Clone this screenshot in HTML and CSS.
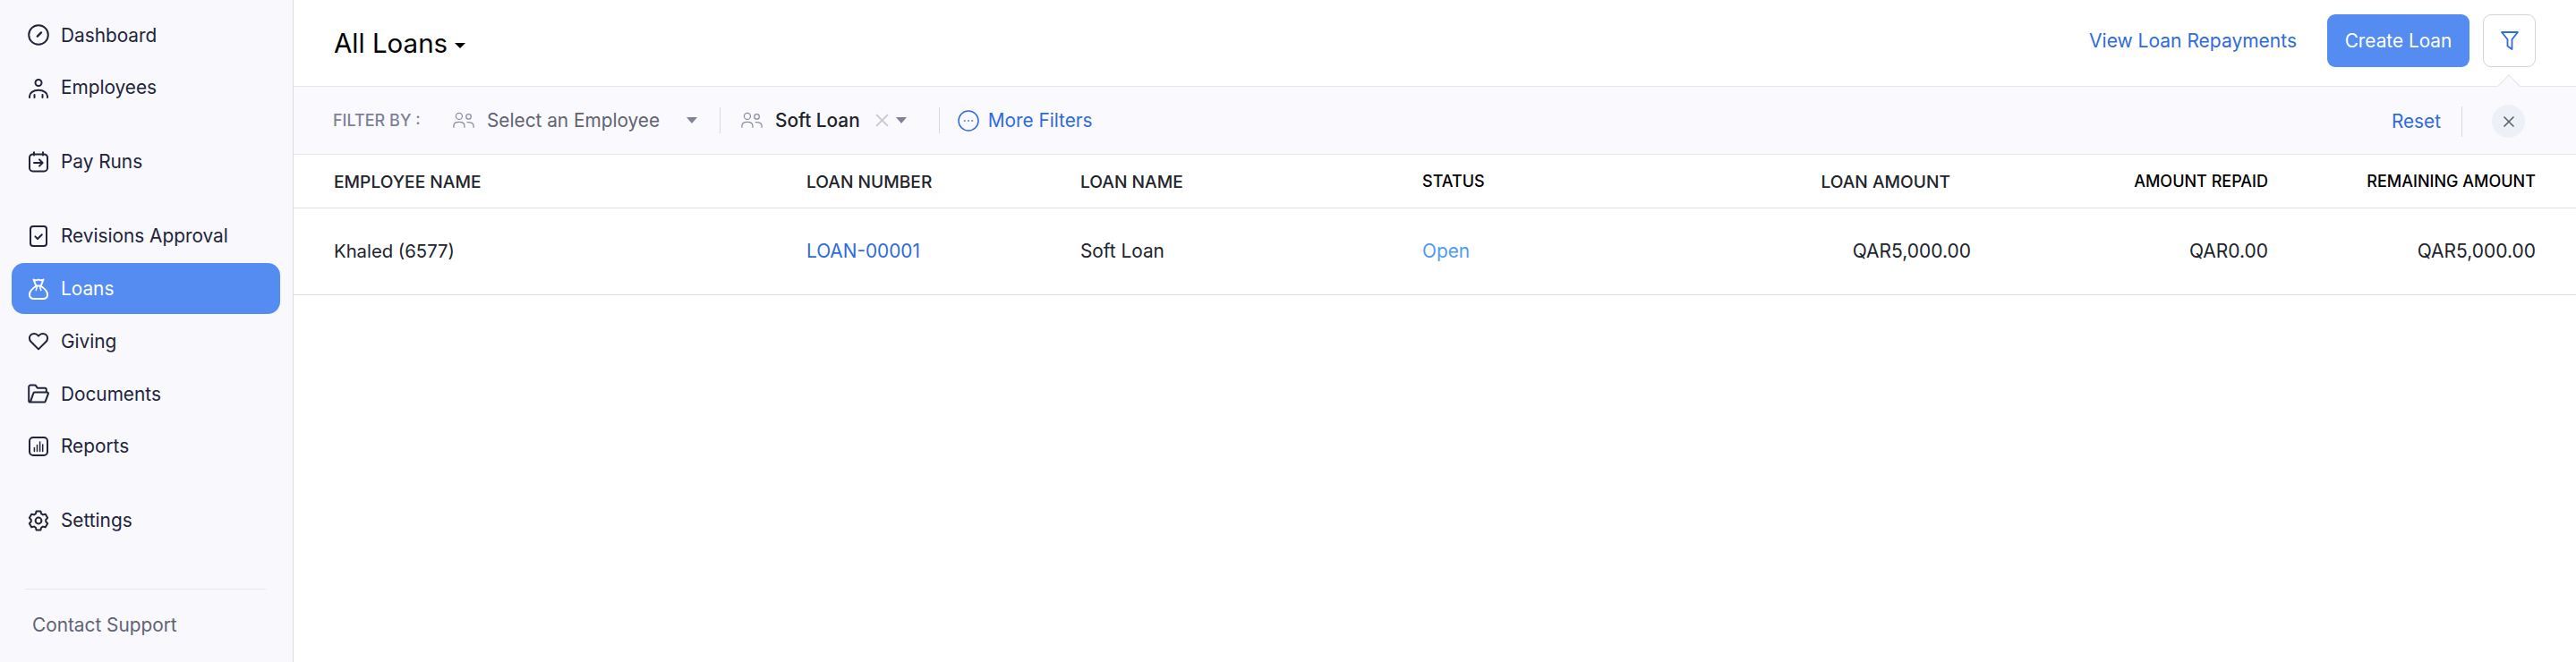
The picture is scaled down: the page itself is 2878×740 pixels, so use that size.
FILE: index.html
```html
<!DOCTYPE html>
<html lang="en">
<head>
    <meta charset="UTF-8">
    <title>All Loans</title>
    <link rel="stylesheet" href="styles.css">
</head>
<body>
    <aside class="sidebar">
        <nav class="nav">
            <div class="nav-group">
                <a class="nav-item" href="#">
                    <svg class="nav-icon" viewBox="0 0 24 24"><circle cx="12" cy="12" r="10.8"/><path d="M10.8 13.6L15 9.4" stroke-width="2.4"/></svg>
                    Dashboard
                </a>
                <a class="nav-item" href="#">
                    <svg class="nav-icon" viewBox="0 0 24 24"><circle cx="12" cy="6.5" r="3.5"/><path d="M2 23v-1.500C2 18 6 14.800 12 14.800S22 18 22 21.500V23M7.500 23v-3M16.500 23v-3"/></svg>
                    Employees
                </a>
            </div>
            <div class="nav-group">
                <a class="nav-item" href="#">
                    <svg class="nav-icon" viewBox="0 0 24 24"><rect x="2" y="3.4" width="20" height="19" rx="3.6"/><path d="M7 1.200v3.400M17 1.200v3.400M7 13h9.500M13 9.400l3.600 3.600-3.600 3.600"/></svg>
                    Pay Runs
                </a>
            </div>
            <div class="nav-group">
                <a class="nav-item" href="#">
                    <svg class="nav-icon" viewBox="0 0 24 24"><rect x="3" y="1" width="18" height="22" rx="3"/><path d="M8.400 12.400l2.600 2.600 4.800-4.800"/></svg>
                    Revisions Approval
                </a>
                <a class="nav-item active" href="#">
                    <svg class="nav-icon" viewBox="0 0 24 24"><path d="M9.800 8.500C5 11.500 2 15 2 18.200 2 21.200 4 23 7 23h10c3 0 5-1.800 5-4.800 0-3.200-3-6.700-7.800-9.700M9.300 8.500h5.400M6.500 1.500L9.300 8.500M17.500 1.500L14.700 8.500M6.500 1.500c1.800 1 3.700 1 5.500 0 1.800 1 3.700 1 5.500 0"/><path d="M10.600 9l-1.400 4.500M13.400 9l1.400 4.500" stroke-width="1.500"/></svg>
                    Loans
                </a>
                <a class="nav-item" href="#">
                    <svg class="nav-icon" viewBox="0 0 24 24"><path d="M12 21.400L3.600 13C1.400 10.800 1.400 7.400 3.400 5.400c2-2 5.400-2 7.400 0L12 6.600l1.200-1.200c2-2 5.400-2 7.400 0s2 5.400-.2 7.600z"/></svg>
                    Giving
                </a>
                <a class="nav-item" href="#">
                    <svg class="nav-icon" viewBox="0 0 24 24"><path d="M2.800 21.600c-1 0-1.600-.6-1.600-1.600V4.600c0-1.200.8-2 2-2h4.400c.8 0 1.400.4 1.800 1l1.400 2.200h8.200c1 0 1.800.8 1.800 1.800v2.800M2.800 21.600h15.400c.8 0 1.400-.4 1.600-1.200l3-8c.4-1-.2-1.800-1.200-1.800H7.800c-.8 0-1.400.4-1.600 1.200z"/></svg>
                    Documents
                </a>
                <a class="nav-item" href="#">
                    <svg class="nav-icon" viewBox="0 0 24 24"><rect x="2" y="2" width="20" height="20" rx="4"/><path d="M7.400 13.400v4M10.500 10.400v7M13.600 7v10.400M16.700 10v7.400" stroke-width="1.5"/></svg>
                    Reports
                </a>
            </div>
            <div class="nav-group">
                <a class="nav-item" href="#">
                    <svg class="nav-icon" viewBox="0 0 24 24"><circle cx="12" cy="12" r="3.4"/><path d="M9.600 1.600h4.800l.8 2.800q1 .4 1.800 1l2.800-.7 2.400 4.200-2 2.100q.2 1 0 2l2 2.100-2.400 4.200-2.800-.7q-.8.6-1.800 1l-.8 2.800H9.600l-.8-2.800q-1-.4-1.800-1l-2.800.7-2.400-4.200 2-2.100q-.2-1 0-2l-2-2.100 2.400-4.200 2.800.7q.8-.6 1.800-1z"/></svg>
                    Settings
                </a>
            </div>
        </nav>
        <div class="support">Contact Support</div>
    </aside>

    <main class="content">
        <header class="topbar">
            <h1 class="title">All Loans <span class="caret caret-dark"></span></h1>
            <div class="actions">
                <a class="link" href="#">View Loan Repayments</a>
                <button class="btn-primary">Create Loan</button>
                <button class="btn-filter">
                    <svg viewBox="0 0 20 21"><path d="M1 1h18l-6.500 8v11l-5-3.500V9z"/></svg>
                </button>
            </div>
        </header>

        <section class="filters">
            <span class="filter-label">FILTER BY :</span>
            <div class="filter-select employee">
                <svg class="people" viewBox="0 0 26 20"><circle cx="7.500" cy="5" r="3.800"/><circle cx="19" cy="5.600" r="3"/><path d="M1 19v-2.500c0-3 2.500-4.500 6.500-4.500s6.500 1.500 6.500 4.500V19M17 12.400c4.500-.4 8 1 8 4.100V19"/></svg>
                <span>Select an Employee</span>
                <span class="caret"></span>
            </div>
            <span class="sep"></span>
            <div class="filter-select loan">
                <svg class="people" viewBox="0 0 26 20"><circle cx="7.500" cy="5" r="3.800"/><circle cx="19" cy="5.600" r="3"/><path d="M1 19v-2.500c0-3 2.500-4.500 6.500-4.500s6.500 1.500 6.500 4.500V19M17 12.400c4.500-.4 8 1 8 4.100V19"/></svg>
                <span class="filter-value">Soft Loan</span>
                <svg class="clear" viewBox="0 0 14 14"><path d="M1 1l12 12M13 1L1 13"/></svg>
                <span class="caret"></span>
            </div>
            <span class="sep"></span>
            <a class="link more" href="#">
                <svg viewBox="0 0 24 24"><circle cx="12" cy="12" r="11"/><path d="M7.500 12h.6M11.700 12h.6M15.900 12h.6"/></svg>
                More Filters
            </a>
            <div class="filter-end">
                <a class="link" href="#">Reset</a>
                <span class="sep"></span>
                <button class="btn-close">
                    <svg viewBox="0 0 14 14"><path d="M1.500 1.500l11 11M12.500 1.500l-11 11"/></svg>
                </button>
            </div>
        </section>

        <table class="loans">
            <colgroup>
                <col class="c-employee"><col class="c-number"><col class="c-name"><col class="c-status"><col class="c-amount"><col class="c-repaid"><col class="c-remaining">
            </colgroup>
            <thead>
                <tr>
                    <th>EMPLOYEE NAME</th>
                    <th>LOAN NUMBER</th>
                    <th>LOAN NAME</th>
                    <th class="small">STATUS</th>
                    <th class="num amount-head">LOAN AMOUNT</th>
                    <th class="num small">AMOUNT REPAID</th>
                    <th class="num small">REMAINING AMOUNT</th>
                </tr>
            </thead>
            <tbody>
                <tr>
                    <td class="employee-name">Khaled (6577)</td>
                    <td><a class="link" href="#">LOAN-00001</a></td>
                    <td>Soft Loan</td>
                    <td class="status">Open</td>
                    <td class="num">QAR5,000.00</td>
                    <td class="num">QAR0.00</td>
                    <td class="num">QAR5,000.00</td>
                </tr>
            </tbody>
        </table>
    </main>
</body>
</html>
```

FILE: styles.css
```css
* {
    margin: 0;
    padding: 0;
    box-sizing: border-box;
    font-family: Inter, "Liberation Sans", sans-serif;
}

body {
    display: flex;
    height: 100vh;
    overflow: hidden;
    background: #fff;
    color: #21232b;
    font-size: 20.8px;
}

a {
    text-decoration: none;
}

.sidebar {
    width: 328px;
    flex-shrink: 0;
    display: flex;
    flex-direction: column;
    background: #f8f8fd;
    border-right: 1px solid #dcdce2;
    padding: 10.5px 14px 0 13px;
}

.nav {
    flex: 1;
    display: flex;
    flex-direction: column;
    gap: 26px;
}

.nav-group {
    display: flex;
    flex-direction: column;
    gap: 1.8px;
}

.nav-item {
    display: flex;
    align-items: center;
    gap: 13px;
    height: 57px;
    padding-left: 18px;
    border-radius: 14px;
    color: #21243a;
}

.nav-item.active {
    background: #548cf1;
    color: #fff;
}

.nav-icon {
    width: 24px;
    height: 24px;
    fill: none;
    stroke: currentColor;
    stroke-width: 2;
    stroke-linecap: round;
    stroke-linejoin: round;
}

.support {
    margin: 0 16px 0 15px;
    height: 82px;
    padding: 27px 0 0 8px;
    border-top: 1px solid #e7e7ec;
    color: #5f6373;
}

.content {
    flex: 1;
    min-width: 0;
}

.topbar {
    display: flex;
    align-items: center;
    justify-content: space-between;
    height: 97px;
    padding: 0 45px;
    border-bottom: 1px solid #e6e6ea;
}

.title {
    font-size: 29.5px;
    font-weight: 400;
    color: #000;
}

.caret {
    display: inline-block;
    border-left: 6px solid transparent;
    border-right: 6px solid transparent;
    border-top: 7px solid #7f8298;
}

.caret-dark {
    border-top: 6px solid #000;
    vertical-align: middle;
}

.actions {
    display: flex;
    align-items: center;
    margin-bottom: 5px;
}

.link {
    color: #2f6bdb;
}

.actions .link {
    margin-right: 34px;
    font-size: 21px;
}

.btn-primary {
    width: 159px;
    height: 59px;
    border: none;
    border-radius: 9px;
    background: #548cf1;
    color: #fff;
    font-size: 20.8px;
}

.btn-filter {
    display: flex;
    align-items: center;
    justify-content: center;
    width: 59px;
    height: 59px;
    margin-left: 15px;
    background: #fff;
    border: 1px solid #d4d4d8;
    border-radius: 9px;
}

.btn-filter svg {
    width: 20px;
    height: 21px;
    fill: none;
    stroke: #2f6bdb;
    stroke-width: 1.8;
    stroke-linejoin: round;
}

.filters {
    position: relative;
    display: flex;
    align-items: center;
    height: 76px;
    padding: 0 57px 0 44px;
    background: #fafafe;
    border-bottom: 1px solid #e6e6ea;
}

/* little arrow pointing up at the filter button */
.filters::before {
    content: "";
    position: absolute;
    top: -10.5px;
    right: 66px;
    width: 17px;
    height: 17px;
    background: #fafafe;
    border-left: 1px solid #e6e6ea;
    border-top: 1px solid #e6e6ea;
    transform: rotate(45deg);
}

.filter-label {
    width: 134px;
    color: #7d8199;
    font-size: 18px;
    font-weight: 500;
}

.filter-select {
    display: flex;
    align-items: center;
    color: #5f6373;
}

.people {
    width: 24px;
    height: 19px;
    margin-right: 14px;
    fill: none;
    stroke: #8b8ea3;
    stroke-width: 1.4;
}

.employee {
    margin-right: 25px;
}

.employee .caret {
    margin-left: 30px;
}

.sep {
    width: 1px;
    height: 29px;
    background: #d8d8dd;
}

.loan {
    margin: 0 36px 0 23px;
}

.filter-value {
    color: #21232b;
    font-weight: 500;
}

.clear {
    width: 15px;
    height: 15px;
    margin: 0 8px 0 17px;
    fill: none;
    stroke: #c9c9ce;
    stroke-width: 1.8;
}

.more {
    display: flex;
    align-items: center;
    gap: 10px;
    margin-left: 20px;
}

.more svg {
    width: 24px;
    height: 24px;
    fill: none;
    stroke: #2f6bdb;
    stroke-width: 1.5;
    stroke-linecap: round;
}

.filter-end {
    display: flex;
    align-items: center;
    margin: 2px 0 0 auto;
}

.filter-end .link {
    margin-right: 23px;
}

.filter-end .sep {
    height: 34px;
}

.btn-close {
    display: flex;
    align-items: center;
    justify-content: center;
    width: 37px;
    height: 37px;
    margin-left: 33px;
    border: none;
    border-radius: 50%;
    background: #edf0f7;
}

.btn-close svg {
    width: 14px;
    height: 14px;
    fill: none;
    stroke: #5c6068;
    stroke-width: 1.6;
}

.loans {
    width: 100%;
    table-layout: fixed;
    border-collapse: separate;
    border-spacing: 0;
}

.c-employee { width: 573px; }
.c-number { width: 306px; }
.c-name { width: 382px; }
.c-status { width: 311px; }
.c-amount { width: 302px; }
.c-repaid { width: 332px; }
.c-remaining { width: 344px; }

.loans th {
    height: 60px;
    text-align: left;
    font-size: 19.2px;
    font-weight: 500;
    color: #21242b;
    border-bottom: 1px solid #dedee2;
}

.loans th.small {
    font-size: 18px;
    color: #000;
}

.loans td {
    height: 97px;
    padding-bottom: 2px;
    font-size: 20.8px;
    color: #21232b;
    border-bottom: 1px solid #dedee2;
}

.loans td.employee-name {
    font-size: 20.3px;
}

.loans td.num {
    font-size: 21px;
}

.loans th:first-child,
.loans td:first-child {
    padding-left: 45px;
}

.loans .num {
    text-align: right;
}

.loans th.amount-head {
    padding-right: 23px;
}

.loans th:last-child,
.loans td:last-child {
    padding-right: 45px;
}

.loans td.status {
    color: #4d9bf5;
}
```
